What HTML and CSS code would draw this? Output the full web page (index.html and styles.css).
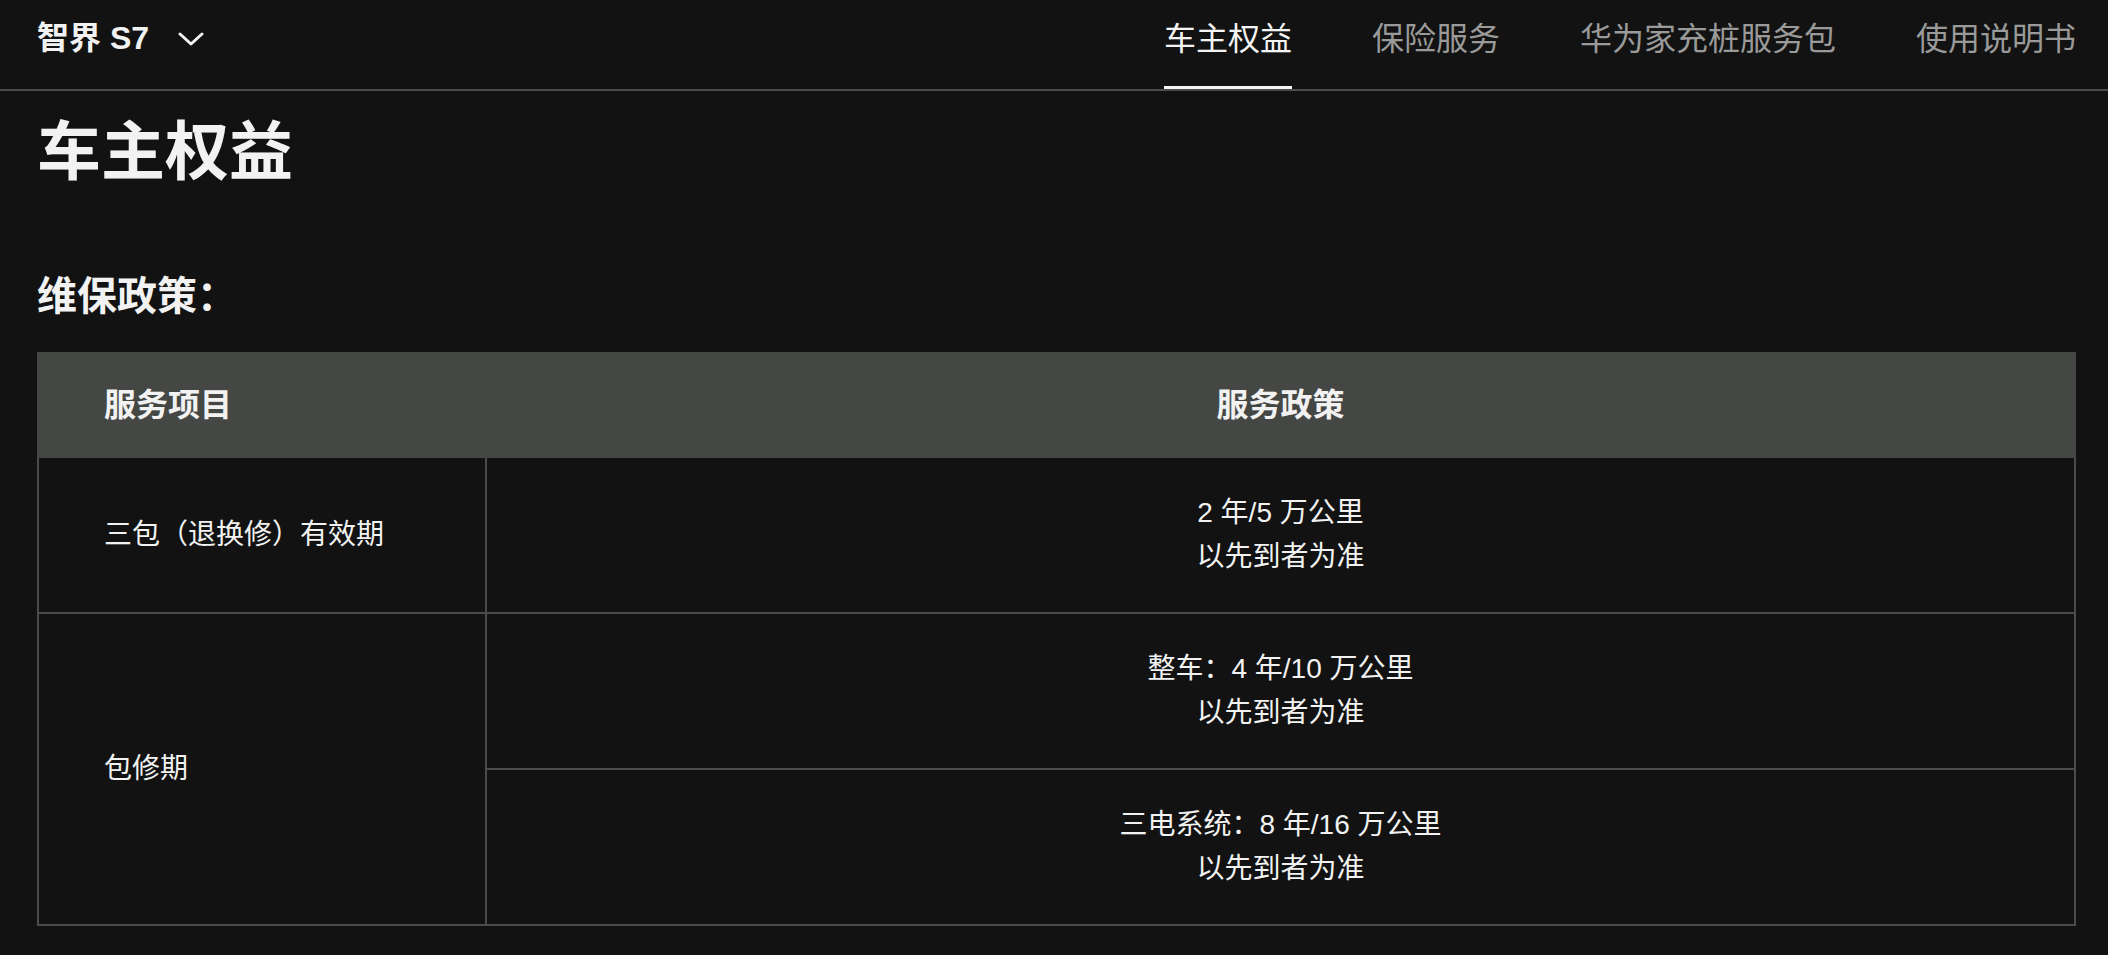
FILE: index.html
```html
<!DOCTYPE html>
<html lang="zh-CN">
<head>
<meta charset="utf-8">
<title>车主权益</title>
<link rel="stylesheet" href="styles.css">
</head>
<body>
<header class="topbar">
  <div class="brand">
    <span class="brand-name">智界 S7</span>
    <svg class="chevron" width="26" height="14" viewBox="0 0 26 14"><polyline points="2,2 13,12 24,2" fill="none" stroke="#f2f2f2" stroke-width="3" stroke-linecap="round" stroke-linejoin="round"/></svg>
  </div>
  <nav class="nav">
    <a class="nav-item active">车主权益</a>
    <a class="nav-item">保险服务</a>
    <a class="nav-item">华为家充桩服务包</a>
    <a class="nav-item">使用说明书</a>
  </nav>
</header>
<main class="content">
  <h1 class="page-title">车主权益</h1>
  <h2 class="section-title">维保政策：</h2>
  <table class="policy">
    <thead>
      <tr>
        <th class="col-item">服务项目</th>
        <th class="col-policy">服务政策</th>
      </tr>
    </thead>
    <tbody>
      <tr>
        <td class="col-item">三包（退换修）有效期</td>
        <td class="col-policy">2 年/5 万公里<br>以先到者为准</td>
      </tr>
      <tr>
        <td class="col-item" rowspan="2">包修期</td>
        <td class="col-policy">整车：4 年/10 万公里<br>以先到者为准</td>
      </tr>
      <tr>
        <td class="col-policy">三电系统：8 年/16 万公里<br>以先到者为准</td>
      </tr>
    </tbody>
  </table>
</main>
</body>
</html>
```
FILE: styles.css
```css
* { box-sizing: border-box; }
html, body {
  margin: 0;
  background: #111211;
  color: #f2f2f2;
  font-family: "Liberation Sans", "Noto Sans CJK SC", sans-serif;
}
.topbar {
  display: flex;
  justify-content: space-between;
  align-items: flex-start;
  height: 91px;
  padding: 0 32px 0 37px;
  border-bottom: 2px solid #4a4b4a;
}
.brand {
  display: flex;
  align-items: center;
  padding-top: 18px;
  height: 58px;
}
.brand-name {
  font-size: 32px;
  font-weight: 700;
  line-height: 40px;
}
.chevron {
  margin-left: 29px;
  margin-top: 2px;
}
.nav {
  display: flex;
  gap: 80px;
}
.nav-item {
  display: block;
  height: 89px;
  padding-top: 19px;
  font-size: 32px;
  line-height: 40px;
  color: #999a99;
  border-bottom: 3px solid transparent;
}
.nav-item.active {
  color: #f4f4f4;
  border-bottom-color: #f4f4f4;
}
.content {
  padding: 21px 32px 0 37px;
}
.page-title {
  margin: 0;
  font-size: 64px;
  font-weight: 700;
  line-height: 80px;
}
.section-title {
  margin: 76px 0 0;
  font-size: 40px;
  font-weight: 700;
  line-height: 56px;
}
.policy {
  margin-top: 28px;
  width: 100%;
  border-collapse: collapse;
  border: 2px solid #4a4b4a;
  font-size: 28px;
  line-height: 44px;
}
.policy th {
  height: 104px;
  background: #454745;
  font-size: 32px;
  font-weight: 700;
  border: 2px solid #454745;
}
.policy td {
  height: 156px;
  border: 2px solid #4a4b4a;
}
.col-item {
  width: 448px;
  text-align: left;
  padding: 0 0 0 65px;
}
.col-policy {
  text-align: center;
  padding: 0;
}
```
